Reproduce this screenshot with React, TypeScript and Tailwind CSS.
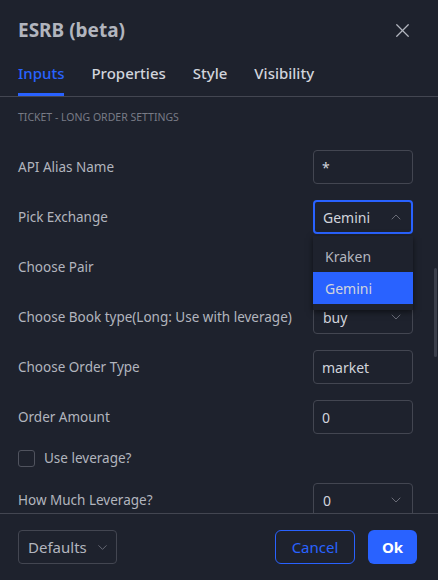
import { X, ChevronDown, ChevronUp } from 'lucide-react';

const font = { fontFamily: '"Noto Sans", "DejaVu Sans", sans-serif' };

function TextField({ value }: { value: string }) {
  return (
    <div className="w-[100px] h-[34px] rounded-[4px] border border-[#434651] flex items-center px-[8px] text-[14px] text-[#d1d4dc]">
      {value}
    </div>
  );
}

function SelectField({ value, open = false }: { value: string; open?: boolean }) {
  return (
    <div className="relative">
      <div
        className={`w-[100px] h-[34px] rounded-[4px] flex items-center justify-between text-[14px] text-[#d1d4dc] ${
          open ? 'border-2 border-[#2962ff] pl-[8px] pr-[7px]' : 'border border-[#434651] pl-[9px] pr-[8px]'
        }`}
      >
        <span>{value}</span>
        {open ? (
          <ChevronUp size={16} strokeWidth={1.25} className="text-[#787b86]" />
        ) : (
          <ChevronDown size={16} strokeWidth={1.25} className="text-[#787b86]" />
        )}
      </div>
      {open && (
        <div className="absolute left-0 top-[36px] z-10 w-[100px] bg-[#1e222d] pt-[4px] pb-[6px] shadow-[0_2px_6px_rgba(0,0,0,0.55)]">
          <div className="h-[32px] flex items-center px-[12px] text-[14px] text-[#b2b5be]">Kraken</div>
          <div className="h-[32px] flex items-center px-[12px] text-[14px] text-[#d1d4dc] bg-[#2962ff]">Gemini</div>
        </div>
      )}
    </div>
  );
}

function Row({ label, children }: { label: string; children: React.ReactNode }) {
  return (
    <div className="h-[50px] flex items-center justify-between">
      <span className="text-[13.5px] text-[#b2b5be]">{label}</span>
      {children}
    </div>
  );
}

export default function App() {
  const tabs = ['Inputs', 'Properties', 'Style', 'Visibility'];

  return (
    <div className="w-[438px] h-[580px] bg-[#1e222d] flex flex-col relative overflow-hidden" style={font}>
      {/* Header */}
      <div className="h-[58px] flex items-center justify-between pl-[18px] pr-[24px] pt-[2px]">
        <h1 className="text-[19px] font-bold text-[#b2b5be]">ESRB (beta)</h1>
        <X size={23} strokeWidth={1.3} className="text-[#b2b5be]" />
      </div>

      {/* Tabs */}
      <div className="h-[39px] flex items-stretch gap-[27px] px-[18px] border-b border-[#434651]">
        {tabs.map((t, i) => (
          <div key={t} className="relative flex items-center pb-[8px]">
            <span className={`text-[15px] font-medium ${i === 0 ? 'text-[#2962ff]' : 'text-[#d1d4dc]'}`}>{t}</span>
            {i === 0 && <div className="absolute left-0 right-0 bottom-0 h-[3px] bg-[#2962ff]" />}
          </div>
        ))}
      </div>

      {/* Content */}
      <div className="flex-1 overflow-hidden px-[18px] pr-[25px]">
        <div className="pt-[12px] pb-[17px] text-[10.5px] leading-[16px] text-[#787b86] uppercase">
          Ticket - Long Order Settings
        </div>
        <Row label="API Alias Name">
          <TextField value="*" />
        </Row>
        <Row label="Pick Exchange">
          <SelectField value="Gemini" open />
        </Row>
        <Row label="Choose Pair">
          <div className="w-[100px]" />
        </Row>
        <Row label="Choose Book type(Long: Use with leverage)">
          <SelectField value="buy" />
        </Row>
        <Row label="Choose Order Type">
          <TextField value="market" />
        </Row>
        <Row label="Order Amount">
          <TextField value="0" />
        </Row>
        <div className="h-[33px] flex items-center gap-[9px]">
          <div className="w-[17px] h-[17px] rounded-[3px] border border-[#50535e]" />
          <span className="text-[13.5px] text-[#b2b5be]">Use leverage?</span>
        </div>
        <Row label="How Much Leverage?">
          <SelectField value="0" />
        </Row>
      </div>

      {/* Scrollbar */}
      <div className="absolute right-[1px] top-[268px] w-[3px] h-[89px] rounded-full bg-[#3a3e4a]" />

      {/* Footer */}
      <div className="h-[67px] shrink-0 border-t border-[#434651] bg-[#1e222d] flex items-center justify-between px-[18px] pr-[21px] z-20">
        <div className="w-[99px] h-[34px] rounded-[4px] border border-[#434651] flex items-center justify-between pl-[9px] pr-[6px] text-[15px] text-[#b2b5be]">
          <span>Defaults</span>
          <ChevronDown size={15} strokeWidth={1.25} className="text-[#787b86]" />
        </div>
        <div className="flex items-center gap-[13px]">
          <div className="w-[80px] h-[34px] rounded-[6px] border border-[#2962ff] flex items-center justify-center text-[15px] text-[#2962ff]">
            Cancel
          </div>
          <div className="w-[49px] h-[34px] rounded-[6px] bg-[#2962ff] flex items-center justify-center text-[15px] font-bold text-white">
            Ok
          </div>
        </div>
      </div>
    </div>
  );
}
